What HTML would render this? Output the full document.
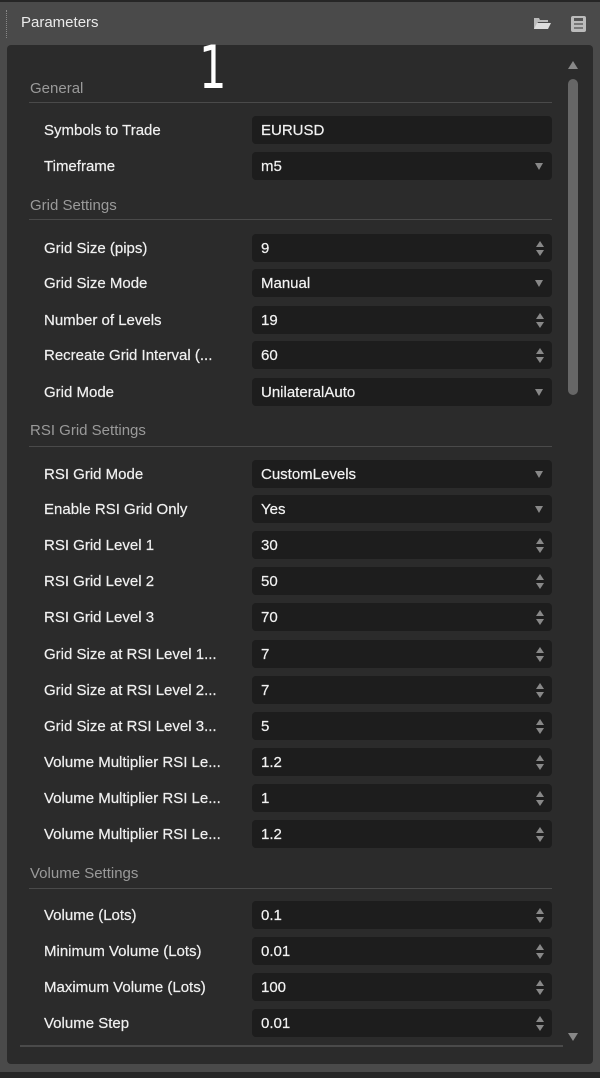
<!DOCTYPE html>
<html><head><style>
*{margin:0;padding:0;box-sizing:border-box}
body{width:600px;height:1078px;background:#262626;position:relative;overflow:hidden;font-family:"Liberation Sans",sans-serif;font-size:15px;color:#e8e8e8}
#outer{position:absolute;left:0;top:2px;width:600px;height:1070px;background:#4a4a4a}
#panel{position:absolute;left:7px;top:45px;width:586px;height:1019px;background:#2b2b2b;border-radius:4px}
.t{position:absolute;white-space:nowrap}
.sec{position:absolute;left:30px;color:#9a9a9a;font-size:15px;margin-top:1px}
.line{position:absolute;left:29px;width:523px;height:1px;background:#4a4a4a}
.lab{position:absolute;left:44px;color:#f0f0f0;margin-top:1px;-webkit-text-stroke:0.2px #f0f0f0}
.f{position:absolute;left:252px;width:300px;height:28px;background:#1d1d1d;border-radius:4px;padding-left:9px;line-height:29px;color:#f2f2f2;-webkit-text-stroke:0.2px #f2f2f2}
.dd::after{content:"";position:absolute;right:9px;top:11px;border-left:4px solid transparent;border-right:4px solid transparent;border-top:7px solid #888}
.sp::before{content:"";position:absolute;right:8px;top:7px;border-left:4px solid transparent;border-right:4px solid transparent;border-bottom:6px solid #888}
.sp::after{content:"";position:absolute;right:8px;top:16px;border-left:4px solid transparent;border-right:4px solid transparent;border-top:6px solid #888}
</style></head><body>
<div id="outer"></div>
<div style="position:absolute;left:6px;top:10px;width:1px;height:28px;border-left:1px dotted #888"></div>
<div class="t" style="left:21px;top:14px;color:#eaeaea;font-size:15px">Parameters</div>
<svg style="position:absolute;left:532px;top:15px" width="20" height="16"><path d="M2 3h5l1 2h8v2H6l-3 7H2z" fill="#bbb"/><path d="M5 8h14l-3 6H2z" fill="#ddd"/></svg>
<svg style="position:absolute;left:570px;top:15px" width="17" height="18"><rect x="1" y="1" width="15" height="16" rx="2" fill="#bbb"/><rect x="4" y="3" width="9" height="3" fill="#555"/><rect x="4" y="8" width="9" height="2" fill="#777"/><rect x="4" y="12" width="9" height="2" fill="#777"/></svg>
<div id="panel"></div>
<div class="t" style="left:199px;top:38px;font-size:60px;line-height:60px;color:#fff;font-family:'DejaVu Sans',sans-serif;transform:scaleX(0.72);transform-origin:left">1</div>
<div style="position:absolute;left:568px;top:61px;border-left:5px solid transparent;border-right:5px solid transparent;border-bottom:8px solid #888"></div>
<div style="position:absolute;left:568px;top:79px;width:10px;height:316px;background:#666;border-radius:5px"></div>
<div style="position:absolute;left:568px;top:1033px;border-left:5px solid transparent;border-right:5px solid transparent;border-top:8px solid #888"></div>
<div style="position:absolute;left:20px;top:1045px;width:543px;height:2px;background:#4a4a4a"></div>

<div class="sec" style="top:79px">General</div><div class="line" style="top:102px"></div>
<div class="lab" style="top:121px">Symbols to Trade</div><div class="f" style="top:116px">EURUSD</div>
<div class="lab" style="top:157px">Timeframe</div><div class="f dd" style="top:152px">m5</div>

<div class="sec" style="top:196px">Grid Settings</div><div class="line" style="top:219px"></div>
<div class="lab" style="top:239px">Grid Size (pips)</div><div class="f sp" style="top:234px">9</div>
<div class="lab" style="top:274px">Grid Size Mode</div><div class="f dd" style="top:269px">Manual</div>
<div class="lab" style="top:311px">Number of Levels</div><div class="f sp" style="top:306px">19</div>
<div class="lab" style="top:346px">Recreate Grid Interval (...</div><div class="f sp" style="top:341px">60</div>
<div class="lab" style="top:383px">Grid Mode</div><div class="f dd" style="top:378px">UnilateralAuto</div>

<div class="sec" style="top:421px">RSI Grid Settings</div><div class="line" style="top:446px"></div>
<div class="lab" style="top:465px">RSI Grid Mode</div><div class="f dd" style="top:460px">CustomLevels</div>
<div class="lab" style="top:500px">Enable RSI Grid Only</div><div class="f dd" style="top:495px">Yes</div>
<div class="lab" style="top:536px">RSI Grid Level 1</div><div class="f sp" style="top:531px">30</div>
<div class="lab" style="top:572px">RSI Grid Level 2</div><div class="f sp" style="top:567px">50</div>
<div class="lab" style="top:608px">RSI Grid Level 3</div><div class="f sp" style="top:603px">70</div>
<div class="lab" style="top:645px">Grid Size at RSI Level 1...</div><div class="f sp" style="top:640px">7</div>
<div class="lab" style="top:681px">Grid Size at RSI Level 2...</div><div class="f sp" style="top:676px">7</div>
<div class="lab" style="top:717px">Grid Size at RSI Level 3...</div><div class="f sp" style="top:712px">5</div>
<div class="lab" style="top:753px">Volume Multiplier RSI Le...</div><div class="f sp" style="top:748px">1.2</div>
<div class="lab" style="top:789px">Volume Multiplier RSI Le...</div><div class="f sp" style="top:784px">1</div>
<div class="lab" style="top:825px">Volume Multiplier RSI Le...</div><div class="f sp" style="top:820px">1.2</div>

<div class="sec" style="top:864px">Volume Settings</div><div class="line" style="top:888px"></div>
<div class="lab" style="top:906px">Volume (Lots)</div><div class="f sp" style="top:901px">0.1</div>
<div class="lab" style="top:942px">Minimum Volume (Lots)</div><div class="f sp" style="top:937px">0.01</div>
<div class="lab" style="top:978px">Maximum Volume (Lots)</div><div class="f sp" style="top:973px">100</div>
<div class="lab" style="top:1014px">Volume Step</div><div class="f sp" style="top:1009px">0.01</div>
</body></html>
